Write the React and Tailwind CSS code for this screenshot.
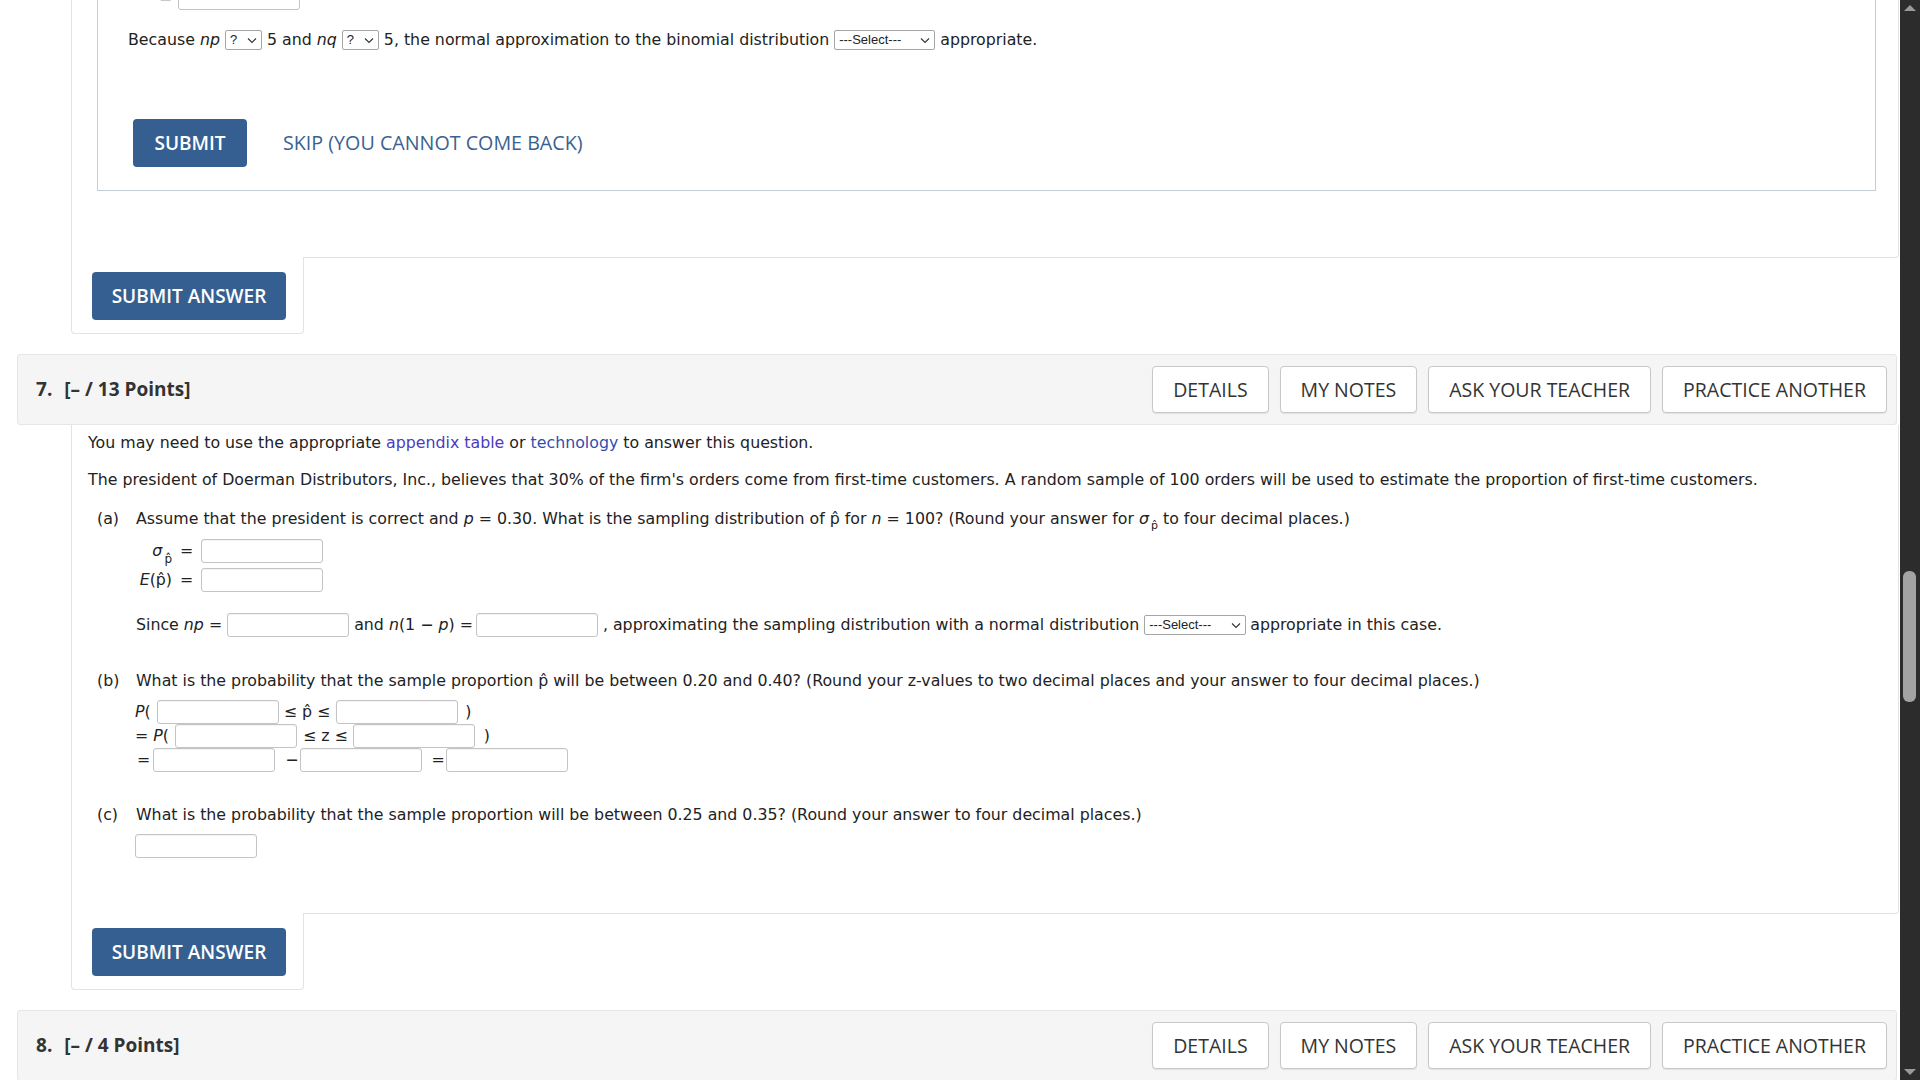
const body = { fontFamily: '"DejaVu Sans", Verdana, sans-serif' };
const sans = { fontFamily: '"Open Sans", "Liberation Sans", sans-serif' };

const HAT = "p\u0302";

const Box = ({ className = "" }) => (
  <span
    className={`inline-block w-[122px] h-[24px] shrink-0 bg-white border border-[#c4c4c4] rounded-[3px] shadow-[inset_0_1px_1px_rgba(0,0,0,0.05)] ${className}`}
  />
);

const Chevron = () => (
  <svg width="10" height="7" viewBox="0 0 10 7" className="shrink-0">
    <path d="M1 1.5 L5 5.5 L9 1.5" fill="none" stroke="#333" strokeWidth="1.1" />
  </svg>
);

const Select = ({ label, width }) => (
  <span
    className={`inline-flex items-center justify-between shrink-0 h-[20px] px-[4px] border border-[#a6a6a6] rounded-[2px] bg-white text-[13px] text-[#222] ${width}`}
    style={{ fontFamily: '"Liberation Sans", Arial, sans-serif' }}
  >
    <span>{label}</span>
    <Chevron />
  </span>
);

const HeaderButton = ({ children }) => (
  <button
    className="h-[47px] px-[20px] bg-white border border-[#c8c8c8] rounded-[4px] shadow-[0_1px_1px_rgba(0,0,0,0.08)] text-[19.5px] text-[#333]"
    style={sans}
  >
    {children}
  </button>
);

const QuestionHeader = ({ num, points }) => (
  <div className="ml-[17px] mr-[3px] h-[71px] shrink-0 flex items-center justify-between bg-[#f5f5f5] border border-[#e6e6e6] rounded-[3px] pl-[18px] pr-[9px]">
    <div className="flex items-center text-[19px] font-bold text-[#333]" style={sans}>
      <span>{num}.</span>
      <span className="ml-[12px]">[– / {points} Points]</span>
    </div>
    <div className="flex items-center gap-[11px]">
      <HeaderButton>DETAILS</HeaderButton>
      <HeaderButton>MY NOTES</HeaderButton>
      <HeaderButton>ASK YOUR TEACHER</HeaderButton>
      <HeaderButton>PRACTICE ANOTHER</HeaderButton>
    </div>
  </div>
);

const SubmitAnswer = () => (
  <div className="flex ml-[71px] mr-[1px] -mt-px shrink-0">
    <div className="w-[233px] h-[77px] bg-white border-x border-b border-[#e3e3e3] rounded-b-[4px] pl-[20px] pt-[15px]">
      <button
        className="w-[194px] h-[48px] bg-[#365f91] rounded-[4px] text-white text-[19px] font-semibold"
        style={sans}
      >
        SUBMIT ANSWER
      </button>
    </div>
  </div>
);

const Sigma = ({ size = "text-[12px]", drop = "top-[10px]" }) => (
  <span className="inline-flex items-start">
    <span className="italic">σ</span>
    <span className={`relative ${drop} ${size} ml-[2px] leading-none`}>{HAT}</span>
  </span>
);

export default function App() {
  return (
    <div className="flex h-screen overflow-hidden bg-white text-[15.8px] text-[#222]" style={body}>
      <main className="w-[1900px] flex flex-col">
        {/* question 6, tail end */}
        <div className="ml-[71px] mr-[1px] border-x border-b border-[#e3e3e3] rounded-br-[4px] pb-[66px] shrink-0">
          <div className="ml-[25px] mr-[22px] flex flex-col border-x border-b border-[#c3cedb] pl-[30px] pb-[23px]">
            <div className="flex items-center h-[24px] -mt-[14px]">
              <span className="ml-[31px]">=</span>
              <Box className="ml-[6px]" />
            </div>
            <div className="flex items-center h-[22px] mt-[19px] whitespace-pre leading-[18px]">
              <span>Because </span>
              <span className="italic">np</span>
              <Select label="?" width="w-[37px] ml-[5px]" />
              <span className="ml-[5px]">5 and </span>
              <span className="italic">nq</span>
              <Select label="?" width="w-[37px] ml-[5px]" />
              <span className="ml-[5px]">5, the normal approximation to the binomial distribution</span>
              <Select label="---Select---" width="w-[101px] ml-[5px]" />
              <span className="ml-[5px]">appropriate.</span>
            </div>
            <div className="flex items-center mt-[68px] ml-[5px]">
              <button
                className="w-[114px] h-[48px] bg-[#365f91] rounded-[4px] text-white text-[19px] font-semibold"
                style={sans}
              >
                SUBMIT
              </button>
              <span className="ml-[36px] text-[19.7px] text-[#3a6291]" style={sans}>
                SKIP (YOU CANNOT COME BACK)
              </span>
            </div>
          </div>
        </div>
        <SubmitAnswer />

        <div className="h-[20px] shrink-0" />
        <QuestionHeader num={7} points={13} />

        {/* question 7 body */}
        <div className="ml-[71px] mr-[1px] border-x border-b border-[#e3e3e3] rounded-br-[4px] pl-[16px] pb-[55px] shrink-0 leading-[18px]">
          <p className="mt-[9px]">
            You may need to use the appropriate{" "}
            <span className="text-[#4b3bbd]">appendix table</span> or{" "}
            <span className="text-[#2f4fae]">technology</span> to answer this question.
          </p>
          <p className="mt-[19px]">
            The president of Doerman Distributors, Inc., believes that 30% of the firm's orders come from
            first-time customers. A random sample of 100 orders will be used to estimate the proportion of
            first-time customers.
          </p>

          {/* (a) */}
          <div className="flex mt-[21px] ml-[9px]">
            <span className="w-[39px] shrink-0">(a)</span>
            <span className="flex items-start whitespace-pre">
              Assume that the president is correct and <span className="italic">p</span> = 0.30. What is the
              sampling distribution of {HAT} for <span className="italic">n</span> = 100? (Round your answer for{" "}
              <Sigma size="text-[11px]" drop="top-[10px]" /> to four decimal places.)
            </span>
          </div>
          <div className="ml-[48px] flex flex-col">
            <div className="flex items-center h-[24px] mt-[11px]">
              <span className="w-[36px] text-right">
                <Sigma drop="top-[11px]" />
              </span>
              <span className="ml-[8px]">=</span>
              <Box className="ml-[8px]" />
            </div>
            <div className="flex items-center h-[24px] mt-[5px]">
              <span className="w-[36px] text-right whitespace-nowrap">
                <span className="italic">E</span>({HAT})
              </span>
              <span className="ml-[8px]">=</span>
              <Box className="ml-[8px]" />
            </div>
            <div className="flex items-center h-[24px] mt-[21px] whitespace-pre">
              <span>
                Since <span className="italic">np</span> =
              </span>
              <Box className="ml-[5px]" />
              <span className="ml-[5px]">
                and <span className="italic">n</span>(1 − <span className="italic">p</span>) =
              </span>
              <Box className="ml-[3px]" />
              <span className="ml-[5px]">, approximating the sampling distribution with a normal distribution</span>
              <Select label="---Select---" width="w-[102px] ml-[5px]" />
              <span className="ml-[4px]">appropriate in this case.</span>
            </div>
          </div>

          {/* (b) */}
          <div className="flex mt-[35px] ml-[9px]">
            <span className="w-[39px] shrink-0">(b)</span>
            <span>
              What is the probability that the sample proportion {HAT} will be between 0.20 and 0.40? (Round your
              z-values to two decimal places and your answer to four decimal places.)
            </span>
          </div>
          <div className="ml-[47px] mt-[10px] flex flex-col whitespace-pre">
            <div className="flex items-center h-[24px]">
              <span>
                <span className="italic">P</span>(
              </span>
              <Box className="ml-[6px]" />
              <span className="ml-[5px]">≤ {HAT} ≤</span>
              <Box className="ml-[6px]" />
              <span className="ml-[7px]">)</span>
            </div>
            <div className="flex items-center h-[24px]">
              <span>
                = <span className="italic">P</span>(
              </span>
              <Box className="ml-[6px]" />
              <span className="ml-[6px]">≤ z ≤</span>
              <Box className="ml-[5px]" />
              <span className="ml-[9px]">)</span>
            </div>
            <div className="flex items-center h-[24px]">
              <span className="ml-[2px]">=</span>
              <Box className="ml-[3px]" />
              <span className="ml-[10px]">−</span>
              <Box className="ml-[1px]" />
              <span className="ml-[10px]">=</span>
              <Box className="ml-[1px]" />
            </div>
          </div>

          {/* (c) */}
          <div className="flex mt-[34px] ml-[9px]">
            <span className="w-[39px] shrink-0">(c)</span>
            <span>
              What is the probability that the sample proportion will be between 0.25 and 0.35? (Round your
              answer to four decimal places.)
            </span>
          </div>
          <div className="ml-[47px] mt-[10px] flex">
            <Box />
          </div>
        </div>
        <SubmitAnswer />

        <div className="h-[20px] shrink-0" />
        <QuestionHeader num={8} points={4} />
      </main>

      {/* browser scrollbar */}
      <div className="relative w-[20px] h-full bg-[#2c2c2c]">
        <svg width="12" height="7" viewBox="0 0 12 7" className="absolute left-[4px] top-[4px]">
          <path d="M0 7 L6 1 L12 7 Z" fill="#9a9a9a" />
        </svg>
        <div className="absolute left-[3px] top-[571px] w-[13px] h-[131px] rounded-[6px] bg-[#a3a3a3]" />
        <svg width="12" height="7" viewBox="0 0 12 7" className="absolute left-[4px] bottom-[4px]">
          <path d="M0 0 L6 6 L12 0 Z" fill="#9a9a9a" />
        </svg>
      </div>
    </div>
  );
}
